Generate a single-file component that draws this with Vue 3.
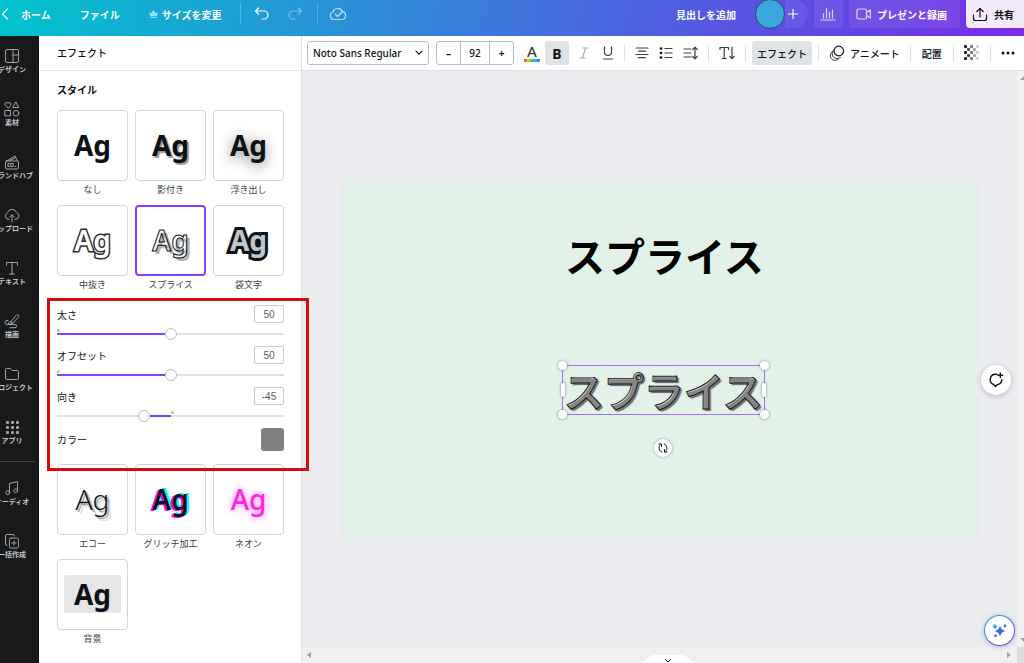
<script setup>
import { ref, reactive } from 'vue'

const railMain = [
  { id: 'design', label: 'デザイン' },
  { id: 'elements', label: '素材' },
  { id: 'brand', label: 'ブランドハブ' },
  { id: 'upload', label: 'アップロード' },
  { id: 'text', label: 'テキスト' },
  { id: 'draw', label: '描画' },
  { id: 'project', label: 'プロジェクト' },
  { id: 'apps', label: 'アプリ' }
]
const railExtra = [
  { id: 'audio', label: 'オーディオ' },
  { id: 'bulk', label: '一括作成' }
]

const topStyles = [
  { id: 'none', label: 'なし' },
  { id: 'shadow', label: '影付き' },
  { id: 'lift', label: '浮き出し' },
  { id: 'hollow', label: '中抜き' },
  { id: 'splice', label: 'スプライス' },
  { id: 'outline', label: '袋文字' }
]
const bottomStyles = [
  { id: 'echo', label: 'エコー' },
  { id: 'glitch', label: 'グリッチ加工' },
  { id: 'neon', label: 'ネオン' },
  { id: 'background', label: '背景' }
]
const selected = ref('splice')

const sliders = reactive([
  { id: 'thickness', label: '太さ', value: 50, min: 0, max: 100, origin: 0 },
  { id: 'offset', label: 'オフセット', value: 50, min: 0, max: 100, origin: 0 },
  { id: 'direction', label: '向き', value: -45, min: -180, max: 180, origin: 50 }
])
const fill = (s) => {
  const pos = ((s.value - s.min) / (s.max - s.min)) * 100
  return {
    '--from': Math.min(pos, s.origin) + '%',
    '--to': Math.max(pos, s.origin) + '%',
    '--origin': s.origin + '%'
  }
}
const size = ref(92)
const title = ref('見出しを追加')
</script>

<template>
  <div class="app">
    <header class="top">
      <nav class="top-left">
        <a href="#" class="home">
          <svg width="8" height="12" viewBox="0 0 8 12"><path d="M6.500 1 1.500 6l5 5" /></svg>
          <span>ホーム</span>
        </a>
        <button class="file">ファイル</button>
        <button class="resize">
          <svg width="9" height="8" viewBox="0 0 9 8"><path class="solid" d="M0 2l2.200 1.300L4.500 0l2.300 3.300L9 2 7.800 6.300H1.200zM1.500 7h6v1h-6z" /></svg>
          <span>サイズを変更</span>
        </button>
        <i class="bar"></i>
        <button class="undo" aria-label="元に戻す">
          <svg width="16" height="14" viewBox="0 0 16 14"><path d="M4.500 1 1.500 4l3 3M1.500 4H10a4 4 0 0 1 0 8H8" /></svg>
        </button>
        <button class="redo" aria-label="やり直し">
          <svg width="16" height="14" viewBox="0 0 16 14"><path d="M11.500 1l3 3-3 3M14.500 4H6a4 4 0 0 0 0 8h2" /></svg>
        </button>
        <i class="bar"></i>
        <button class="cloud" aria-label="保存済み">
          <svg width="18" height="14" viewBox="0 0 18 14"><path d="M12 12.500H5a3.700 3.700 0 0 1-1.200-7.200A5 5 0 0 1 13.300 4.600 4 4 0 0 1 13 12.500M6.200 7.200l2.300 2.300L13.500 4.500" /></svg>
        </button>
      </nav>
      <div class="top-right">
        <button class="name">{{ title }}</button>
        <div class="people">
          <button class="avatar" aria-label="アカウント"></button>
          <button class="invite" aria-label="メンバーを追加">
            <svg width="10" height="10" viewBox="0 0 10 10"><path d="M5 .500v9M.500 5h9" /></svg>
          </button>
        </div>
        <button class="tile stats" aria-label="インサイト">
          <svg width="16" height="14" viewBox="0 0 16 14"><path d="M1 13h14M3.500 11V6.500M6.500 11V1.500M9.500 11V5M12.500 11V3" /></svg>
        </button>
        <button class="tile present">
          <svg width="16" height="12" viewBox="0 0 16 12"><rect x="1" y="1" width="9.500" height="10" rx="1.500" /><path d="M10.500 4.500 14.300 2v8l-3.800-2.500" /></svg>
          <span>プレゼンと録画</span>
        </button>
        <button class="share">
          <svg width="16" height="15" viewBox="0 0 16 15"><path d="M1.500 8v3.500a2 2 0 0 0 2 2h9a2 2 0 0 0 2-2V8M8 10V1.500M4.800 4.500 8 1.300l3.200 3.200" /></svg>
          <span>共有</span>
        </button>
      </div>
    </header>

    <div class="body">
      <nav class="rail">
        <div class="rail-list">
          <template v-for="(group, g) in [railMain, railExtra]" :key="g">
            <i v-if="g" class="rail-line"></i>
            <button v-for="r in group" :key="r.id" class="rail-item">
              <svg width="16" height="16" viewBox="0 0 16 16">
                <g v-if="r.id === 'design'"><rect x="1.500" y="1.500" width="13" height="13" rx="1.500" /><path d="M9 1.500v13M9 7h5.500" /></g>
                <g v-else-if="r.id === 'elements'"><path d="M4 7 1.300 4.200a1.600 1.600 0 0 1 2.700-2 1.600 1.600 0 0 1 2.700 2zM12 1.200 14.800 6.500H9.200z" /><rect x="1.200" y="9.500" width="5.300" height="5.300" /><circle cx="12" cy="12.200" r="2.800" /></g>
                <g v-else-if="r.id === 'brand'"><rect x="1.500" y="7" width="13" height="8" rx="1" /><path d="M3 6.800 11 2l1 1.800M5 6.800l6.800-3 1.500 3M5.500 9.500H4v3h1.500M7.200 9.500h2v3h-2zM11 12.500h1" /></g>
                <g v-else-if="r.id === 'upload'"><path d="M5 12.500a3.500 3.500 0 0 1-1.500-6.700 4.700 4.700 0 0 1 9-.300 3.600 3.600 0 0 1-1.500 7M8 15V8M5.800 10 8 7.800l2.200 2.200" /></g>
                <g v-else-if="r.id === 'text'"><path d="M2.500 5V2.500h11V5M8 2.500V14M5.500 14h5" /></g>
                <g v-else-if="r.id === 'draw'"><path d="M7 8.500 12.500 2a1.400 1.400 0 0 1 2 2L9 10zM7 8.500C5.500 8.500 5 9.800 4 10.500c1.500.800 4 .500 5-.500M4 7.500H3a2 2 0 0 0 0 4h8a1.500 1.500 0 0 1 0 3.200H6" /></g>
                <g v-else-if="r.id === 'project'"><path d="M1.500 12.500v-9a1 1 0 0 1 1-1h3.800L8 4.500h5.500a1 1 0 0 1 1 1v7a1 1 0 0 1-1 1h-11a1 1 0 0 1-1-1z" /></g>
                <g v-else-if="r.id === 'apps'" class="dots"><template v-for="y in 3" :key="y"><rect v-for="x in 3" :key="x" :x="x * 5 - 3" :y="y * 5 - 3" width="3" height="3" rx="1" /></template></g>
                <g v-else-if="r.id === 'audio'"><path d="M5.500 12.500V3.500l8-2v9" /><circle cx="3.700" cy="12.700" r="1.900" /><circle cx="11.700" cy="10.700" r="1.900" /></g>
                <g v-else><rect x="5.500" y="5" width="9" height="10" rx="1.500" /><path d="M3 12.500a1.500 1.500 0 0 1-1.500-1.500V3A1.500 1.500 0 0 1 3 1.500h6A1.500 1.500 0 0 1 10.500 3M10 7.800v4.400M7.800 10h4.400" /></g>
              </svg>
              <span>{{ r.label }}</span>
            </button>
          </template>
        </div>
      </nav>

      <aside class="panel">
        <h2 class="panel-title">エフェクト</h2>
        <div class="panel-body">
          <h3 class="panel-sub">スタイル</h3>
          <div class="grid">
            <button v-for="s in topStyles" :key="s.id" class="style" :class="{ on: selected === s.id }" @click="selected = s.id">
              <span class="card"><span class="ag" :class="s.id">Ag</span></span>
              <span class="cap">{{ s.label }}</span>
            </button>
          </div>

          <section class="settings">
            <div v-for="s in sliders" :key="s.id" class="setting">
              <div class="line">
                <label :for="s.id">{{ s.label }}</label>
                <input v-model="s.value" class="num" type="text" :aria-label="s.label" />
              </div>
              <div class="track" :class="s.id" :style="fill(s)">
                <input :id="s.id" v-model.number="s.value" type="range" :min="s.min" :max="s.max" />
              </div>
            </div>
            <div class="line color">
              <label for="color">カラー</label>
              <button id="color" class="swatch"></button>
            </div>
          </section>

          <div class="grid">
            <button v-for="s in bottomStyles" :key="s.id" class="style" @click="selected = s.id">
              <span class="card"><span class="ag" :class="s.id">Ag</span></span>
              <span class="cap">{{ s.label }}</span>
            </button>
          </div>
        </div>
      </aside>

      <main class="main">
        <div class="toolbar">
          <div class="group fields">
            <div class="font">
              <select aria-label="フォント"><option>Noto Sans Regular</option></select>
              <svg width="8" height="6" viewBox="0 0 8 6"><path d="M1 1.200l3 3 3-3" /></svg>
            </div>
            <div class="stepper">
              <button aria-label="小さく" @click="size--">–</button>
              <input v-model.number="size" type="text" aria-label="文字サイズ" />
              <button aria-label="大きく" @click="size++">+</button>
            </div>
          </div>
          <div class="group marks">
            <button class="tool color-tool" aria-label="文字色">
              <span>A</span><i></i>
            </button>
            <button class="tool bold">B</button>
          </div>
          <div class="group slants">
            <button class="tool italic" aria-label="斜体">
              <svg width="10" height="12" viewBox="0 0 10 12"><path d="M4 1h5M1 11h5M6.500 1l-3 10" /></svg>
            </button>
            <button class="tool under" aria-label="下線">
              <svg width="12" height="14" viewBox="0 0 12 14"><path d="M2.500 1v5a3.500 3.500 0 0 0 7 0V1M1.500 13h9" /></svg>
            </button>
          </div>
          <i class="sep"></i>
          <button class="tool" aria-label="配置揃え">
            <svg width="14" height="12" viewBox="0 0 14 12"><path d="M1 1h12M3.500 4.200h7M1 7.500h12M3.500 10.700h7" /></svg>
          </button>
          <button class="tool" aria-label="リスト">
            <svg width="14" height="12" viewBox="0 0 14 12"><path d="M6 1.500h7M6 6h7M6 10.500h7" /><path class="thick" d="M2 1.500h.1M2 6h.1M2 10.500h.1" /></svg>
          </button>
          <button class="tool" aria-label="スペース">
            <svg width="15" height="14" viewBox="0 0 15 14"><path d="M1 3h7M1 7h7M1 11h7M12 1.500v11M9.800 3.500 12 1.200l2.200 2.300M9.800 10.500l2.200 2.300 2.200-2.300" /></svg>
          </button>
          <i class="sep"></i>
          <button class="tool" aria-label="縦書き">
            <svg width="16" height="14" viewBox="0 0 16 14"><path d="M1 3.500V1.500h8.500v2M5.200 1.500V12M3.300 12.500h4M13 1v11.500M10.800 10.300l2.200 2.300 2.200-2.300" /></svg>
          </button>
          <i class="sep"></i>
          <button class="word active">エフェクト</button>
          <i class="sep"></i>
          <button class="word">
            <svg width="16" height="16" viewBox="0 0 16 16"><circle cx="9.800" cy="6" r="4.800" /><path class="thin" d="M5 4.500a5 5 0 0 0 6.500 8M3 6.800a4.600 4.600 0 0 0 6 7.500" /></svg>
            <span>アニメート</span>
          </button>
          <i class="sep"></i>
          <button class="word place">配置</button>
          <i class="sep"></i>
          <button class="tool" aria-label="透明度">
            <svg class="checker" width="16" height="16" viewBox="0 0 16 16"><template v-for="y in 5" :key="y"><template v-for="x in 5" :key="x"><rect v-if="(x + y) % 2 === 0" :x="x * 3 - 3" :y="y * 3 - 3" width="3" height="3" rx="1" :opacity="1.15 - x * 0.19" /></template></template></svg>
          </button>
          <i class="sep"></i>
          <button class="tool more" aria-label="その他">
            <svg width="14" height="4" viewBox="0 0 14 4"><circle cx="2" cy="2" r="1.500" /><circle cx="7" cy="2" r="1.500" /><circle cx="12" cy="2" r="1.500" /></svg>
          </button>
        </div>

        <div class="stage">
          <div class="viewport">
            <div class="artboard">
              <p class="headline">スプライス</p>
              <div class="selection">
                <p class="spliced">スプライス</p>
                <i class="knob tl"></i><i class="knob tr"></i><i class="knob bl"></i><i class="knob br"></i>
                <i class="grip l"></i><i class="grip r"></i>
                <button class="rotate" aria-label="回転">
                  <svg width="12" height="12" viewBox="0 0 12 12"><path d="M4.800 10A4.300 4.300 0 0 1 3.200 2.800M2 2h2.500v2.500M7.200 2a4.300 4.300 0 0 1 1.600 7.200M10 10H7.500V7.500" /></svg>
                </button>
              </div>
            </div>
          </div>
          <div class="vbar"><i class="up"></i><i class="down"></i></div>
        </div>
        <div class="hbar">
          <i class="left"></i>
          <i class="right"></i>
          <i class="corner"></i>
          <button class="drawer" aria-label="ページを表示">
            <svg width="54" height="8" viewBox="0 0 54 8"><path class="tab" d="M0 8C5 8 7 0 14 0h26c7 0 9 8 14 8z" /><path class="chev" d="M24.500 4.500 27 7l2.500-2.500" /></svg>
          </button>
        </div>
        <button class="float comment" aria-label="コメント">
          <svg width="16" height="16" viewBox="0 0 16 16"><path d="M9 2.300H7.500a5.300 5.300 0 0 0-2 10.200L7.500 14.500l2-1.900a5.200 5.200 0 0 0 4.300-4.800M12.300 1v4.600M10 3.300h4.600" /></svg>
        </button>
        <button class="float magic" aria-label="マジック">
          <svg width="18" height="18" viewBox="0 0 18 18"><path class="star" d="M9 3.500Q10 8.200 14.500 9 10 9.800 9 14.500 8 9.800 3.500 9 8 8.200 9 3.500z" /><path class="mint" d="M4 1.500Q4.600 4 7 4.500 4.600 5 4 7.300 3.400 5 1 4.500 3.400 4 4 1.500z" /><circle class="star" cx="14" cy="4" r="1.400" /><circle class="violet" cx="4.500" cy="13.800" r="1.400" /></svg>
        </button>
      </main>
    </div>
  </div>
</template>

<style>
html, body { margin: 0; }
</style>

<style scoped>
* { box-sizing: border-box; }
.app {
  display: flex;
  flex-direction: column;
  height: 100vh;
  overflow: hidden;
  font-family: "Noto Sans", "Noto Sans CJK JP", sans-serif;
  font-size: 10px;
  color: #0d1216;
}
button, input, select { font: inherit; color: inherit; }
button { padding: 0; border: 0; background: none; white-space: nowrap; }
svg { display: block; flex: none; fill: none; stroke: currentColor; stroke-linecap: round; stroke-linejoin: round; }
h2, h3, p { margin: 0; }
i { flex: none; }

.top {
  flex: none;
  display: flex;
  justify-content: space-between;
  height: 36px;
  padding-bottom: 8px;
  background: linear-gradient(100deg, #00c4cc, #2b8fd8 34%, #4e61e0 63%, #6a3be4 90%, #7d2ae8);
  color: #fff;
  font-weight: 700;
}
.top-left, .top-right { display: flex; align-items: center; }
.top svg { stroke-width: 1.2; }
.home { display: flex; align-items: center; gap: 12px; padding-left: 1px; color: #fff; text-decoration: none; }
.file { margin-left: 29px; }
.resize { display: flex; align-items: center; gap: 4px; margin-left: 29px; }
.resize svg { opacity: .6; }
.solid { fill: currentColor; stroke: none; }
.bar { width: 1px; height: 22px; background: rgba(255, 255, 255, .2); }
.resize + .bar { margin-left: 19px; }
.undo { margin-left: 13px; }
.redo { margin: 0 14px 0 17px; opacity: .4; }
.cloud { margin-left: 11px; opacity: .7; }
.people { display: flex; align-items: center; margin: 0 6px 0 19px; }
.avatar { width: 30px; height: 30px; border: 1px solid #1d4f6e; border-radius: 50%; background: #3ba7dc; }
.invite { display: flex; align-items: center; justify-content: center; width: 23px; height: 28px; padding-right: 7px; border-radius: 0 14px 14px 0; background: rgba(255, 255, 255, .07); }
.tile { display: flex; align-items: center; height: 28px; border-radius: 0 0 4px 4px; background: rgba(255, 255, 255, .08); }
.stats { width: 29px; margin-right: 6px; padding-left: 6px; }
.stats svg { opacity: .75; }
.present { gap: 5px; width: 111px; margin-right: 6px; padding-left: 7px; }
.present svg { opacity: .8; }
.share { display: flex; align-items: center; gap: 6px; height: 28px; padding: 0 10px 0 6px; border-radius: 0 0 0 4px; background: #f3ebfd; color: #0d1216; }

.body { flex: 1; display: flex; min-height: 0; }
.rail { flex: none; width: 39px; overflow: hidden; background: #18191b; color: #c3c4c6; }
.rail-list { display: flex; flex-direction: column; width: 54px; margin-left: -15px; padding-top: 7px; }
.rail-item { display: flex; flex-direction: column; align-items: center; gap: 1px; height: 53px; padding-top: 5px; font-size: 7px; font-weight: 700; line-height: 10px; }
.rail-item svg { opacity: .8; }
.dots rect { fill: currentColor; stroke: none; }
.rail-line { height: 1px; margin: -6px 4px 13px 10px; background: #414244; }

.panel { flex: none; position: relative; z-index: 1; width: 263px; border-right: 1px solid #dfe0e4; background: #fff; }
.panel-title { height: 35px; padding-left: 18px; border-bottom: 1px solid #e5e6e9; font-size: 10px; font-weight: 500; line-height: 34px; }
.panel-body { padding: 0 17px 0 18px; }
.panel-sub { padding: 9px 0 10px; font-size: 10px; font-weight: 700; line-height: 20px; }
.grid { display: grid; grid-template-columns: repeat(3, 1fr); column-gap: 7px; }
.style { display: flex; flex-direction: column; padding-bottom: 6px; }
.card { display: flex; align-items: center; justify-content: center; width: 100%; aspect-ratio: 1; padding-bottom: 2px; border: 1px solid #d3d5d9; border-radius: 4px; background: #fff; }
.on .card { border: 2px solid #8b3dff; }
.cap { width: 100%; font-size: 9px; line-height: 18px; text-align: center; color: #3a3f44; }
.ag { font-size: 28px; font-weight: 700; line-height: 38px; color: #0d1216; }
.shadow { text-shadow: 2px 2px 1px #999; }
.lift { text-shadow: 0 3px 14px rgba(0, 0, 0, .5); }
.hollow { font-weight: 600; color: #fff; -webkit-text-stroke: 3px #2a2e32; paint-order: stroke fill; }
.splice { font-weight: 600; color: transparent; -webkit-text-stroke: 1px #0d1216; text-shadow: 3px 3px 0 #b5b5b8; }
.outline { color: #c0c6cb; -webkit-text-stroke: 6px #0d1216; paint-order: stroke fill; }
.echo { font-weight: 300; text-shadow: 2px 2px 0 rgba(0, 0, 0, .35), 4px 4px 0 rgba(0, 0, 0, .15); }
.glitch { font-weight: 600; text-shadow: -2px 1px 0 #f0f, 2px -1px 0 #0ff; }
.neon { font-weight: 500; color: #fb26e5; text-shadow: 0 0 5px #fd9bf2, 0 2px 12px #fdb9f6; }
.background { padding: 0 10px; border-radius: 2px; background: #e6e6e6; }

.settings { position: relative; padding: 5px 0 13px; }
.settings::after { content: ""; position: absolute; inset: -2px -25px -7px -10px; border: 3px solid #d90a0a; pointer-events: none; }
.setting { height: 41px; }
.line { display: flex; align-items: center; justify-content: space-between; height: 18px; }
.num { width: 30px; height: 18px; padding: 0; border: 1px solid #c6c9ce; border-radius: 2px; background: #fff; font-family: "Liberation Sans", sans-serif; font-size: 10px; text-align: center; color: #5c6166; outline: 0; }
.track { position: relative; height: 12px; margin-top: 5px; }
.track::before { content: ""; position: absolute; top: 1px; left: var(--origin); width: 3px; height: 3px; border-radius: 50%; background: #b6b9be; }
.track input {
  appearance: none;
  display: block;
  width: 100%;
  height: 12px;
  margin: 0;
  background: linear-gradient(to right, #dfe1e5 var(--from), #8b3dff var(--from), #8b3dff var(--to), #dfe1e5 var(--to)) center / 100% 2px no-repeat;
}
.track input::-webkit-slider-thumb { appearance: none; width: 12px; height: 12px; border: 1px solid #b9bcc1; border-radius: 50%; background: #fff; }
.color { height: 23px; }
.swatch { width: 23px; height: 23px; border-radius: 3px; background: #808080; }

.main { flex: 1; position: relative; display: flex; flex-direction: column; min-width: 0; }
.toolbar { flex: none; display: flex; align-items: center; gap: 10px; height: 35px; padding: 0 11px 0 5px; border-bottom: 1px solid #e0e1e4; background: #fff; font-weight: 500; }
.toolbar svg { stroke-width: 1.2; }
.group { display: flex; align-items: center; }
.fields { gap: 7px; }
.marks { gap: 5px; }
.slants { gap: 13px; }
.font { position: relative; width: 122px; height: 24px; }
.font select { appearance: none; width: 100%; height: 100%; padding: 0 6px 0 5px; border: 1px solid #b9bcc1; border-radius: 3px; background: #fff; font-size: 10px; }
.font svg { position: absolute; right: 6px; top: 9px; pointer-events: none; }
.stepper { display: flex; width: 78px; height: 24px; border: 1px solid #b9bcc1; border-radius: 3px; }
.stepper button { width: 23px; font-weight: 700; }
.stepper input { flex: 1; width: 30px; min-width: 0; padding: 0; border: 1px solid #b9bcc1; border-width: 0 1px; background: none; text-align: center; outline: 0; }
.tool { display: flex; align-items: center; justify-content: center; color: #3a3f44; }
.color-tool { flex-direction: column; width: 16px; font-size: 15px; line-height: 15px; }
.color-tool i { width: 16px; height: 3px; border-radius: 1px; background: linear-gradient(to right, #f22, #fc0, #3d4, #0cf, #83f); }
.bold { width: 24px; height: 24px; border-radius: 3px; background: #e0e3e6; font-size: 14px; font-weight: 700; color: #0d1216; }
.italic { color: #a9abae; }
.thick { stroke-width: 2.6; stroke: #0d1216; }
.sep { width: 1px; height: 17px; background: #dfe1e4; }
.word { display: flex; align-items: center; gap: 5px; height: 24px; }
.active { margin: 0 -4px; padding: 0 5px; border-radius: 3px; background: #e0e3e6; }
.place { padding: 0 1px; }
.thin { stroke-width: .8; }
.checker { fill: #0d1216; stroke: none; }
.more svg { fill: #0d1216; stroke: none; }

.stage { flex: 1; display: flex; min-height: 0; }
.viewport { flex: 1; display: flex; align-items: center; padding: 0 40px 0 41px; background: #ebecf0; }
.artboard { position: relative; width: 100%; aspect-ratio: 634 / 358; background: #e2f2e8; box-shadow: 0 0 3px rgba(0, 0, 0, .06); }
.headline, .spliced { font-size: 40px; font-weight: 700; line-height: 48px; white-space: nowrap; font-family: "Noto Sans CJK JP", sans-serif; }
.headline { position: absolute; left: 222px; top: 51px; color: #000; }
.selection { position: absolute; left: 219px; top: 185px; border: 1px solid #a570ff; padding: 0 1px; }
.spliced { color: transparent; -webkit-text-stroke: 1px #15181a; text-shadow: 1px 1px 0 #858585, 2px 2px 1px #5d6478; }
.knob, .grip { position: absolute; background: #fff; box-shadow: 0 0 2px 1px rgba(60, 70, 90, .3); }
.knob { width: 9px; height: 9px; border-radius: 50%; }
.tl, .tr { top: -5px; }
.bl, .br { bottom: -5px; }
.tl, .bl { left: -5px; }
.tr, .br { right: -5px; }
.grip { top: 17px; width: 4px; height: 14px; border-radius: 2px; }
.l { left: -2px; }
.r { right: -2px; }
.rotate { position: absolute; left: 50%; top: 73px; display: flex; align-items: center; justify-content: center; width: 18px; height: 18px; margin-left: -9px; border-radius: 50%; background: #fff; box-shadow: 0 0 2px 1px rgba(60, 70, 90, .25); }
.vbar { flex: none; display: flex; flex-direction: column; align-items: flex-end; justify-content: space-between; width: 7px; padding: 5px 0; background: #f1f1f1; }
.vbar i { border: 4px solid transparent; border-right-width: 0; }
.vbar .up { border-bottom-color: #9c9c9c; border-top-width: 0; }
.vbar .down { border-top-color: #9c9c9c; border-bottom-width: 0; }
.hbar { flex: none; position: relative; display: flex; align-items: center; height: 16px; padding-left: 5px; background: #f0f0f0; }
.left { border: 3px solid transparent; border-left-width: 0; border-right: 4px solid #a0a0a0; }
.right { margin: 0 6px 0 auto; border: 3px solid transparent; border-right-width: 0; border-left: 4px solid #a0a0a0; }
.corner { width: 7px; height: 16px; background: #dcdcdc; }
.drawer { position: absolute; left: 47%; bottom: 0; }
.tab { fill: #fff; stroke: none; }
.float { position: absolute; display: flex; align-items: center; justify-content: center; border-radius: 50%; background: #fff; box-shadow: 0 1px 5px rgba(50, 60, 90, .3); }
.comment { right: 13px; top: 329px; width: 30px; height: 30px; }
.comment svg { stroke-width: 1.4; }
.magic { right: 9px; bottom: 17px; width: 31px; height: 31px; border: 1px solid transparent; background: linear-gradient(#fff, #fff) padding-box, linear-gradient(135deg, #10b6cc, #7d35d8) border-box; }
.star { fill: #4668d8; stroke: none; }
.mint { fill: #1ba7c4; stroke: none; }
.violet { fill: #7a50d8; stroke: none; }
</style>
